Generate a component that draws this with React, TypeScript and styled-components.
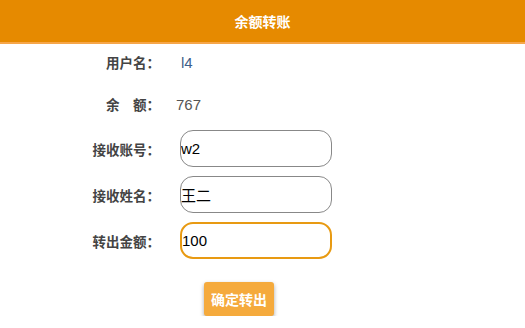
import styled, { createGlobalStyle } from "styled-components";

const GlobalStyle = createGlobalStyle`
  body {
    margin: 0;
    background: #fff;
    font-family: "Liberation Sans", Arial, "Noto Sans CJK SC", sans-serif;
  }
`;

const Header = styled.header`
  height: 42px;
  background-color: #e68a00;
  border-bottom: 2px solid #f6a64a;
  display: flex;
  align-items: center;
  justify-content: center;
  color: #fff;
  font-size: 14px;
  font-weight: bold;
  font-family: "Noto Sans CJK SC", sans-serif;
`;

const Form = styled.form`
  display: flex;
  flex-direction: column;
  gap: 10px;
  padding-top: 2px;
`;

const Row = styled.div<{ $tall?: boolean }>`
  display: grid;
  grid-template-columns: 160px 152px;
  column-gap: 20px;
  align-items: center;
  height: ${(p) => (p.$tall ? "36px" : "32px")};
`;

const Label = styled.label`
  text-align: right;
  font-size: 13.5px;
  font-weight: bold;
  color: #444;
  font-family: "Noto Sans CJK SC", sans-serif;
`;

const Value = styled.span<{ $color?: string; $shift?: number }>`
  font-size: 15px;
  color: ${(p) => p.$color || "#555"};
  margin-left: ${(p) => p.$shift || 0}px;
`;

const Input = styled.input<{ $active?: boolean }>`
  box-sizing: border-box;
  width: 152px;
  height: 37px;
  padding: 0;
  border: ${(p) => (p.$active ? "2px solid #e89a12" : "1px solid #888")};
  border-radius: 13px;
  font-size: 15px;
  color: #000;
  caret-color: #000;
  background: #fff;
  outline: none;
  font-family: "Liberation Sans", Arial, "Noto Sans CJK SC", sans-serif;
`;

const Footer = styled.div`
  padding: 24px 0 0 204px;
`;

const Button = styled.button`
  width: 70px;
  height: 34px;
  padding: 0;
  border: none;
  border-radius: 3px;
  background-color: #f5aa3c;
  color: #fff;
  font-size: 14px;
  font-weight: bold;
  font-family: "Noto Sans CJK SC", sans-serif;
  box-shadow: 0 2px 4px rgba(0, 0, 0, 0.35);
  cursor: pointer;
`;

export default function App() {
  return (
    <>
      <GlobalStyle />
      <Header>余额转账</Header>
      <Form onSubmit={(e) => e.preventDefault()}>
        <Row>
          <Label>用户名：</Label>
          <Value $color="#3d5f8a" $shift={1}>l4</Value>
        </Row>
        <Row>
          <Label>余　额：</Label>
          <Value $shift={-4}>767</Value>
        </Row>
        <Row $tall>
          <Label>接收账号：</Label>
          <Input defaultValue="w2" />
        </Row>
        <Row $tall>
          <Label>接收姓名：</Label>
          <Input defaultValue="王二" />
        </Row>
        <Row $tall>
          <Label>转出金额：</Label>
          <Input $active autoFocus defaultValue="100" />
        </Row>
      </Form>
      <Footer>
        <Button type="button">确定转出</Button>
      </Footer>
    </>
  );
}
